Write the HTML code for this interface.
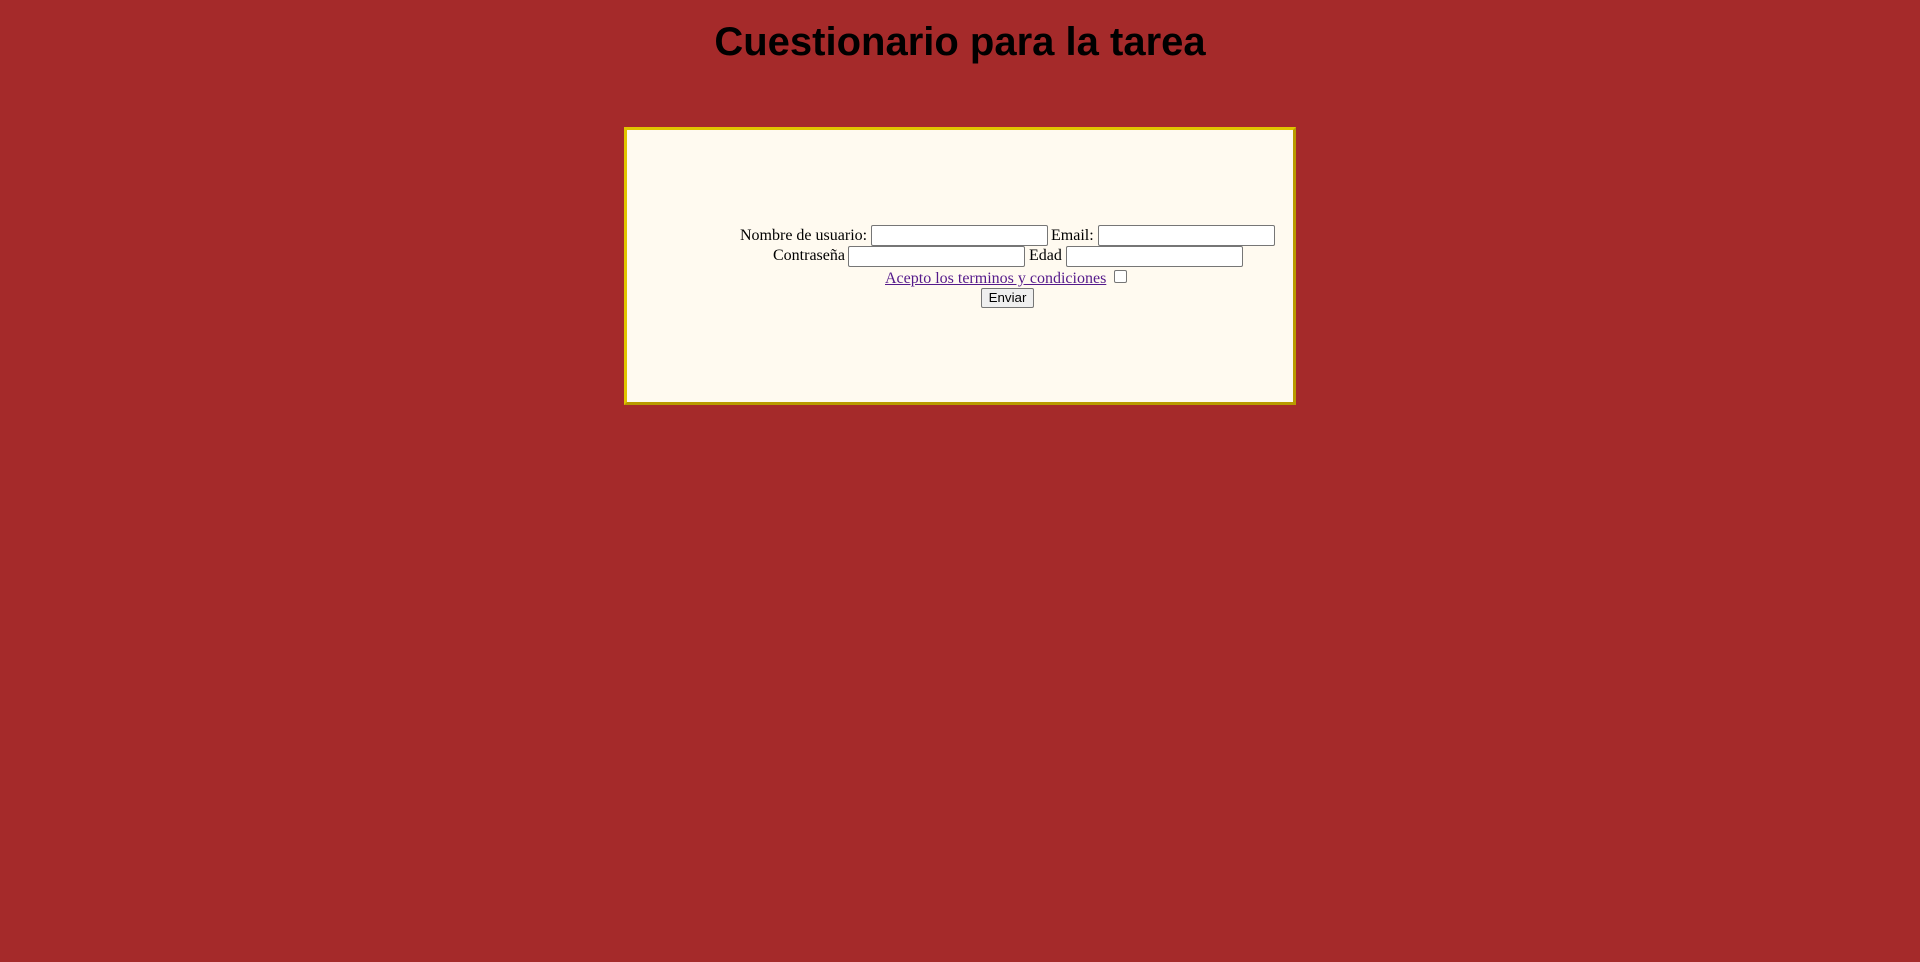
<!DOCTYPE html>
<html><head><meta charset="utf-8"><style>
html,body{margin:0;padding:0;width:1920px;height:962px;background:#a52a2a;overflow:hidden;position:relative}
.t{position:absolute;font-family:"Liberation Serif",serif;font-size:16px;line-height:18px;white-space:nowrap;color:#000}
h1{position:absolute;left:0;width:1920px;top:20px;margin:0;text-align:center;font-family:"Liberation Sans",sans-serif;font-weight:bold;font-size:40px;line-height:45px;color:#000}
.box{position:absolute;left:624px;top:127px;width:666px;height:272px;background:#fffaf0;border:3px solid;border-color:#e0c400 #b89a00 #b89a00 #e0c400}
.in{position:absolute;background:#fff;border:1px solid #767676;border-radius:2px;box-sizing:border-box;width:177px;height:21px}
.btn{position:absolute;left:981px;top:288px;width:53px;height:20px;box-sizing:border-box;background:#efefef;border:1px solid #767676;border-radius:2px;font-family:"Liberation Sans",sans-serif;font-size:13.33px;line-height:18px;text-align:center;color:#000}
.cb{position:absolute;left:1114px;top:270px;width:11px;height:11px;border:1px solid #767676;border-radius:2px;background:#fff}
a{color:#551a8b;text-decoration:underline}
</style></head><body>
<h1>Cuestionario para la tarea</h1>
<div class="box"></div>
<div class="t" style="left:740px;top:227px">Nombre de usuario:</div>
<div class="in" style="left:871px;top:225px"></div>
<div class="t" style="left:1051px;top:227px">Email:</div>
<div class="in" style="left:1098px;top:225px"></div>
<div class="t" style="left:773px;top:247px">Contraseña</div>
<div class="in" style="left:848px;top:246px"></div>
<div class="t" style="left:1029px;top:247px">Edad</div>
<div class="in" style="left:1066px;top:246px"></div>
<div class="t" style="left:885px;top:270px"><a>Acepto los terminos y condiciones</a></div>
<div class="cb"></div>
<div class="btn">Enviar</div>
</body></html>
